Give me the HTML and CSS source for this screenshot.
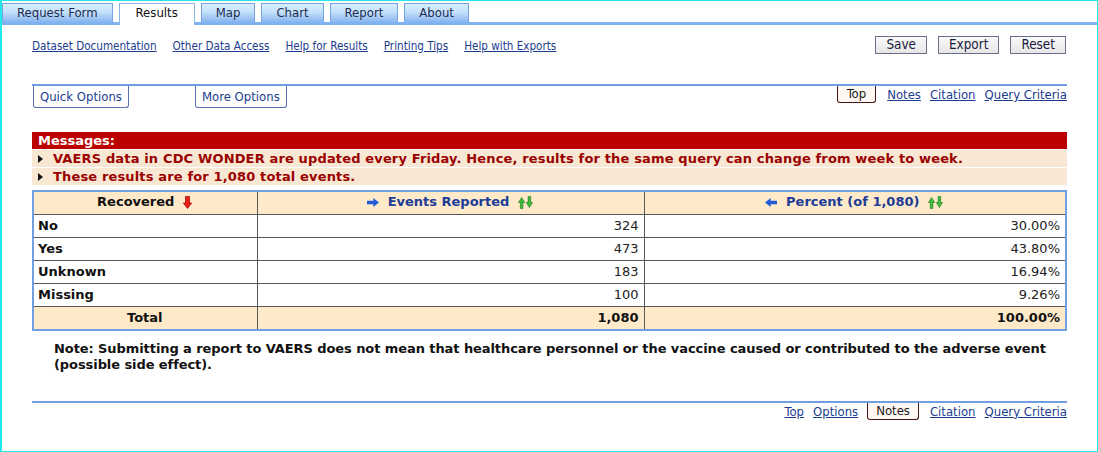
FILE: index.html
```html
<!DOCTYPE html>
<html>
<head>
<meta charset="utf-8">
<title>Results</title>
<link rel="stylesheet" href="styles.css">
</head>
<body>
<div class="frame">
  <nav class="tabs">
    <span class="tab">Request Form</span>
    <span class="tab active">Results</span>
    <span class="tab">Map</span>
    <span class="tab">Chart</span>
    <span class="tab">Report</span>
    <span class="tab">About</span>
  </nav>
  <main class="content">
    <div class="toolbar">
      <div class="links">
        <a href="#">Dataset Documentation</a>
        <a href="#">Other Data Access</a>
        <a href="#">Help for Results</a>
        <a href="#">Printing Tips</a>
        <a href="#">Help with Exports</a>
      </div>
      <div class="buttons">
        <button class="btn">Save</button>
        <button class="btn">Export</button>
        <button class="btn">Reset</button>
      </div>
    </div>

    <div class="optbar">
      <div class="opts">
        <span class="optbtn">Quick Options</span>
        <span class="optbtn">More Options</span>
      </div>
      <div class="nav">
        <span class="navbox">Top</span>
        <a href="#">Notes</a>
        <a href="#">Citation</a>
        <a href="#">Query Criteria</a>
      </div>
    </div>

    <section class="messages">
      <div class="msg-head">Messages:</div>
      <div class="msg"><svg class="bullet" width="5" height="8" viewBox="0 0 5 8"><path d="M0 0L5 4L0 8z" fill="#111"/></svg>VAERS data in CDC WONDER are updated every Friday. Hence, results for the same query can change from week to week.</div>
      <div class="msg"><svg class="bullet" width="5" height="8" viewBox="0 0 5 8"><path d="M0 0L5 4L0 8z" fill="#111"/></svg>These results are for 1,080 total events.</div>
    </section>

    <table class="results">
      <colgroup><col class="c1"><col class="c2"><col class="c3"></colgroup>
      <thead>
        <tr>
          <th class="h-black"><span class="hcell">Recovered<svg class="ico" width="9" height="13" viewBox="0 0 9 13"><path d="M2.5 0.5h4v6.5h2.2L4.5 12.5L0.3 7h2.2z" fill="#e8201a" stroke="#a30000" stroke-width="0.7"/></svg></span></th>
          <th class="h-blue"><span class="hcell"><svg class="ico arrow-l" width="12" height="9" viewBox="0 0 12 9"><path d="M0 2.8h6.3V0L12 4.5L6.3 9V6.2H0z" fill="#1f5ad8"/></svg>Events Reported<svg class="sort" width="15" height="13" viewBox="0 0 15 13"><path d="M2.3 12.5V6.5H0.4L3.6 1.5L6.8 6.5H4.9v6z" fill="#3dbb3d" stroke="#1f7a1f" stroke-width="0.6"/><path d="M10.1 0.5v6H8.2l3.2 5l3.2-5h-1.9v-6z" fill="#3dbb3d" stroke="#1f7a1f" stroke-width="0.6"/></svg></span></th>
          <th class="h-blue"><span class="hcell"><svg class="ico arrow-l" width="12" height="9" viewBox="0 0 12 9"><path d="M12 2.8H5.7V0L0 4.5L5.7 9V6.2H12z" fill="#1f5ad8"/></svg>Percent (of 1,080)<svg class="sort" width="15" height="13" viewBox="0 0 15 13"><path d="M2.3 12.5V6.5H0.4L3.6 1.5L6.8 6.5H4.9v6z" fill="#3dbb3d" stroke="#1f7a1f" stroke-width="0.6"/><path d="M10.1 0.5v6H8.2l3.2 5l3.2-5h-1.9v-6z" fill="#3dbb3d" stroke="#1f7a1f" stroke-width="0.6"/></svg></span></th>
        </tr>
      </thead>
      <tbody>
        <tr><td class="lbl">No</td><td class="num">324</td><td class="num">30.00%</td></tr>
        <tr><td class="lbl">Yes</td><td class="num">473</td><td class="num">43.80%</td></tr>
        <tr><td class="lbl">Unknown</td><td class="num">183</td><td class="num">16.94%</td></tr>
        <tr><td class="lbl">Missing</td><td class="num">100</td><td class="num">9.26%</td></tr>
        <tr class="total"><td class="tot-lbl">Total</td><td class="num">1,080</td><td class="num">100.00%</td></tr>
      </tbody>
    </table>

    <p class="note">Note: Submitting a report to VAERS does not mean that healthcare personnel or the vaccine caused or contributed to the adverse event (possible side effect).</p>

    <div class="botbar">
      <a href="#">Top</a>
      <a href="#">Options</a>
      <span class="navbox">Notes</span>
      <a href="#">Citation</a>
      <a href="#">Query Criteria</a>
    </div>
  </main>
</div>
</body>
</html>
```

FILE: styles.css
```css
html, body {
  margin: 0;
  padding: 0;
  background: #fff;
}

.frame {
  width: 1098px;
  height: 452px;
  box-sizing: border-box;
  border: 1px solid #22eaea;
  border-left-width: 2px;
  background: #fff;
  overflow: hidden;
  font-family: "DejaVu Sans", Verdana, sans-serif;
}

/* Tabs */
.tabs {
  display: flex;
  align-items: flex-end;
  gap: 6px;
  margin-top: 2px;
  height: 19px;
  border-bottom: 3px solid #7fb2f2;
}

.tab {
  box-sizing: border-box;
  height: 19px;
  padding: 0 14px;
  border: 1px solid #78a5e2;
  border-bottom: none;
  background: linear-gradient(#d8eeff 0%, #c4e1fb 45%, #a3c8f4 75%, #88b6ee 100%);
  color: #1e2c50;
  font-family: "DejaVu Sans Condensed", "DejaVu Sans", sans-serif;
  font-size: 13px;
  line-height: 18px;
  white-space: nowrap;
}

.tab.active {
  height: 22px;
  margin-bottom: -3px;
  background: #fff;
  border-color: #8fb3e2;
  padding: 0 16px;
  color: #111;
}

/* Content area */
.content {
  padding: 0 30px;
}

a {
  color: #1c3c8f;
  text-decoration: underline;
}

.toolbar {
  display: flex;
  justify-content: space-between;
  align-items: center;
  margin-top: 11px;
  height: 18px;
}

.links {
  display: flex;
  gap: 16px;
  font-family: "DejaVu Sans Condensed", "DejaVu Sans", sans-serif;
  font-size: 11.6px;
  padding-top: 1px;
}

.buttons {
  display: flex;
  gap: 11px;
  margin-right: 1px;
}

.btn {
  height: 18px;
  box-sizing: border-box;
  padding: 0 10px;
  border: 1px solid #6c6c8c;
  border-radius: 0;
  background: linear-gradient(#fafafa, #e6e6e6);
  color: #1a1a3c;
  font-family: "DejaVu Sans Condensed", "DejaVu Sans", sans-serif;
  font-size: 13.4px;
  line-height: 16px;
}

/* Options bar */
.optbar {
  display: flex;
  justify-content: space-between;
  align-items: flex-start;
  margin-top: 30px;
  border-top: 2px solid #6f9fe2;
}

.opts {
  display: flex;
  gap: 66px;
  padding-left: 1px;
}

.optbtn {
  box-sizing: border-box;
  height: 22px;
  padding: 0 6px;
  border: 1px solid #5573b0;
  border-top: none;
  border-radius: 0 0 3px 3px;
  color: #1c3c8f;
  font-family: "DejaVu Sans Condensed", "DejaVu Sans", sans-serif;
  font-size: 13px;
  line-height: 21px;
}

.nav, .botbar {
  display: flex;
  align-items: flex-start;
  gap: 9px;
  font-family: "DejaVu Sans Condensed", "DejaVu Sans", sans-serif;
  font-size: 13px;
}

.nav a, .botbar a {
  line-height: 17px;
}

.navbox {
  box-sizing: border-box;
  height: 17px;
  padding: 0 7px;
  border: 1px solid #4a1414;
  border-top: none;
  border-radius: 0 0 3px 3px;
  background: #fff8f2;
  color: #1a1a1a;
  font-size: 13px;
  line-height: 16px;
  margin-right: 2px;
}

.nav .navbox {
  padding: 0 9px;
}

.botbar .navbox {
  padding: 0 8px;
}

/* Messages */
.messages {
  margin-top: 24px;
}

.msg-head {
  height: 17px;
  line-height: 17px;
  padding-left: 6px;
  background: #bb0000;
  color: #fff;
  font-weight: bold;
  font-size: 13px;
}

.msg {
  display: flex;
  align-items: center;
  height: 17px;
  margin-top: 1px;
  padding-left: 6px;
  background: #f8e7d2;
  color: #9a0000;
  font-weight: bold;
  font-size: 13px;
  letter-spacing: 0.15px;
  white-space: nowrap;
}

.bullet {
  margin-right: 10px;
  flex: none;
}

/* Table */
.results {
  width: 100%;
  margin-top: 5px;
  border-collapse: collapse;
  border: 2px solid #70a0e2;
  font-size: 13px;
}

.results col.c1 { width: 224px; }
.results col.c2 { width: 387px; }

.results th,
.results td {
  border: 1px solid #575757;
  height: 16px;
  padding: 3px 5px 3px 4px;
  line-height: 16px;
  white-space: nowrap;
}

.results thead th {
  background: #fee9c9;
  text-align: center;
  font-weight: bold;
  padding-top: 2px;
  padding-bottom: 3px;
}

.hcell {
  display: inline-flex;
  align-items: center;
  height: 16px;
}

.results th.h-black { color: #111; }
.results th.h-blue { color: #1c3c98; }

.ico {
  margin-left: 9px;
}

.ico.arrow-l {
  margin-left: 0;
  margin-right: 9px;
}

.sort {
  margin-left: 9px;
}

.results td.lbl {
  font-weight: bold;
  color: #111;
}

.results td.num {
  text-align: right;
  color: #222;
}

.results tr.total td {
  background: #fee9c9;
  font-weight: bold;
  color: #111;
}

.results td.tot-lbl {
  text-align: center;
}

/* Note */
.note {
  margin: 10px 0 0 22px;
  font-weight: bold;
  font-size: 13px;
  line-height: 16px;
  color: #111;
  letter-spacing: -0.08px;
}

.botbar {
  margin-top: 28px;
  border-top: 2px solid #6f9fe2;
  justify-content: flex-end;
}
```
